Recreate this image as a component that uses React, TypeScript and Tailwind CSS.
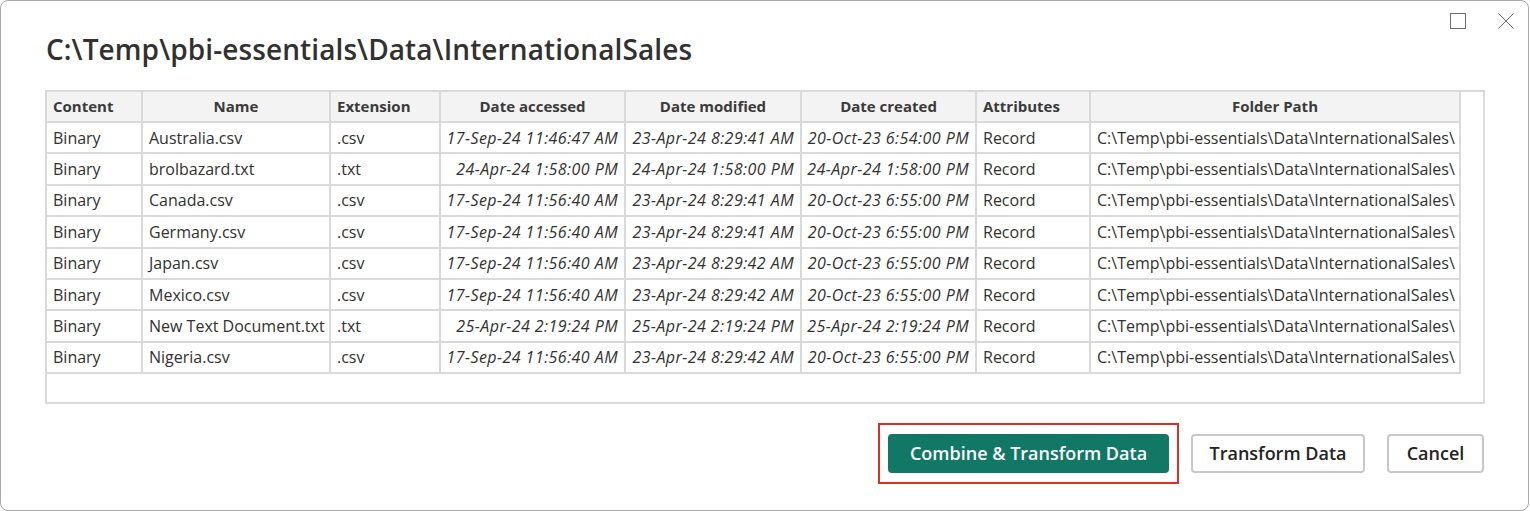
import React from 'react'

const font = { fontFamily: '"Open Sans", "Noto Sans", Arial, sans-serif' }

type Row = {
  name: string
  ext: string
  accessed: string
  modified: string
  created: string
}

const folder = 'C:\\Temp\\pbi-essentials\\Data\\InternationalSales\\'

const rows: Row[] = [
  { name: 'Australia.csv', ext: '.csv', accessed: '17-Sep-24 11:46:47 AM', modified: '23-Apr-24 8:29:41 AM', created: '20-Oct-23 6:54:00 PM' },
  { name: 'brolbazard.txt', ext: '.txt', accessed: '24-Apr-24 1:58:00 PM', modified: '24-Apr-24 1:58:00 PM', created: '24-Apr-24 1:58:00 PM' },
  { name: 'Canada.csv', ext: '.csv', accessed: '17-Sep-24 11:56:40 AM', modified: '23-Apr-24 8:29:41 AM', created: '20-Oct-23 6:55:00 PM' },
  { name: 'Germany.csv', ext: '.csv', accessed: '17-Sep-24 11:56:40 AM', modified: '23-Apr-24 8:29:41 AM', created: '20-Oct-23 6:55:00 PM' },
  { name: 'Japan.csv', ext: '.csv', accessed: '17-Sep-24 11:56:40 AM', modified: '23-Apr-24 8:29:42 AM', created: '20-Oct-23 6:55:00 PM' },
  { name: 'Mexico.csv', ext: '.csv', accessed: '17-Sep-24 11:56:40 AM', modified: '23-Apr-24 8:29:42 AM', created: '20-Oct-23 6:55:00 PM' },
  { name: 'New Text Document.txt', ext: '.txt', accessed: '25-Apr-24 2:19:24 PM', modified: '25-Apr-24 2:19:24 PM', created: '25-Apr-24 2:19:24 PM' },
  { name: 'Nigeria.csv', ext: '.csv', accessed: '17-Sep-24 11:56:40 AM', modified: '23-Apr-24 8:29:42 AM', created: '20-Oct-23 6:55:00 PM' },
]

/* column widths, each includes its right 2px grid line */
const cols = [
  { key: 'content', title: 'Content', w: 'w-[96px]', head: 'justify-start' },
  { key: 'name', title: 'Name', w: 'w-[188px]', head: 'justify-center' },
  { key: 'ext', title: 'Extension', w: 'w-[110px]', head: 'justify-start' },
  { key: 'accessed', title: 'Date accessed', w: 'w-[185px]', head: 'justify-center' },
  { key: 'modified', title: 'Date modified', w: 'w-[176px]', head: 'justify-center' },
  { key: 'created', title: 'Date created', w: 'w-[175px]', head: 'justify-center' },
  { key: 'attr', title: 'Attributes', w: 'w-[114px]', head: 'justify-start' },
  { key: 'folder', title: 'Folder Path', w: 'w-[370px]', head: 'justify-center' },
]

function Cell({
  w,
  align = 'left',
  italic,
  children,
}: {
  w: string
  align?: 'left' | 'right'
  italic?: boolean
  children: React.ReactNode
}) {
  return (
    <div
      className={`${w} shrink-0 h-full border-r-2 border-b-2 border-[#d9d9d9] flex items-center px-[6px] overflow-hidden whitespace-nowrap ${
        align === 'right' ? 'justify-end' : 'justify-start'
      } ${italic ? 'italic tracking-[0.45px]' : ''}`}
    >
      {children}
    </div>
  )
}

export default function App() {
  return (
    <div className="w-[1530px] h-[511px] bg-white" style={font}>
      <div className="relative w-[1529px] h-[511px] border border-[#a9a9a9] rounded-[8px] bg-white text-[#323130]">
        {/* window buttons */}
        <div className="absolute top-[12px] right-[14px] flex items-center gap-[32px]">
          <svg width="16" height="16" viewBox="0 0 16 16">
            <rect x="0.5" y="0.5" width="15" height="15" fill="none" stroke="#6b6b6b" strokeWidth="1" />
          </svg>
          <svg width="16" height="16" viewBox="0 0 16 16">
            <path d="M0.5 0.5 L15.5 15.5 M15.5 0.5 L0.5 15.5" stroke="#6b6b6b" strokeWidth="1" />
          </svg>
        </div>

        {/* title */}
        <h1 className="pl-[45px] pt-[30px] text-[28px] leading-[36px] font-semibold text-[#323130] tracking-[0.1px]">
          C:\Temp\pbi-essentials\Data\InternationalSales
        </h1>

        {/* table */}
        <div className="ml-[44px] mt-[23px] w-[1440px] h-[314px] border-2 border-[#d9d9d9] text-[16px]">
          <div className="flex h-[31px]">
            {cols.map((c) => (
              <div
                key={c.key}
                className={`${c.w} ${c.head} shrink-0 h-full bg-[#f3f3f3] border-r-2 border-b-2 border-[#d9d9d9] flex items-center px-[6px] text-[15px] font-bold text-[#3b3a39] whitespace-nowrap`}
              >
                {c.title}
              </div>
            ))}
          </div>
          {rows.map((r) => (
            <div key={r.name} className="flex h-[31.4px]">
              <Cell w="w-[96px]">Binary</Cell>
              <Cell w="w-[188px]">{r.name}</Cell>
              <Cell w="w-[110px]">{r.ext}</Cell>
              <Cell w="w-[185px]" align="right" italic>{r.accessed}</Cell>
              <Cell w="w-[176px]" align="right" italic>{r.modified}</Cell>
              <Cell w="w-[175px]" align="right" italic>{r.created}</Cell>
              <Cell w="w-[114px]">Record</Cell>
              <Cell w="w-[370px]">{folder}</Cell>
            </div>
          ))}
        </div>

        {/* footer buttons */}
        <div className="flex items-center justify-end pr-[44px] mt-[19px] gap-[12px]">
          <div className="border-2 border-[#dc2f26] px-[8px] py-[9px]">
            <button className="h-[39px] w-[281px] rounded-[4px] bg-[#117865] text-white text-[18px] font-semibold">
              Combine &amp; Transform Data
            </button>
          </div>
          <button className="h-[39px] w-[174px] rounded-[4px] border-2 border-[#c8c8c8] bg-white text-[18px] font-semibold text-[#252423]">
            Transform Data
          </button>
          <button className="ml-[10px] h-[39px] w-[97px] rounded-[4px] border-2 border-[#c8c8c8] bg-white text-[18px] font-semibold text-[#252423]">
            Cancel
          </button>
        </div>
      </div>
    </div>
  )
}
